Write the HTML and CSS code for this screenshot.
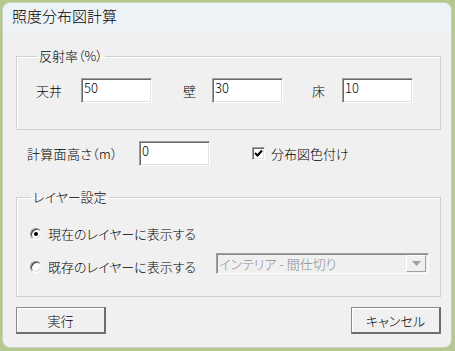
FILE: index.html
```html
<!DOCTYPE html>
<html lang="ja">
<head>
  <meta charset="UTF-8" />
  <title>照度分布図計算</title>
  <link rel="stylesheet" href="styles.css">
</head>
<body>
  <div class="window">
    <div class="titlebar">照度分布図計算</div>

    <div class="content">
      <!-- 反射率 -->
      <fieldset class="group group-reflect">
        <legend>反射率（%）</legend>
        <div class="reflect-row">
          <span class="label label-ceil">天井</span>
          <div class="textbox">50</div>
          <span class="label label-wall">壁</span>
          <div class="textbox">30</div>
          <span class="label label-floor">床</span>
          <div class="textbox">10</div>
        </div>
      </fieldset>

      <!-- 計算面高さ -->
      <div class="height-row">
        <span class="label label-height">計算面高さ（m）</span>
        <div class="textbox">0</div>
        <label class="check">
          <span class="check-box">
            <svg width="11" height="11" viewBox="0 0 11 11"><path d="M2 5 L4.5 7.5 L9 2.5" fill="none" stroke="#000" stroke-width="2"/></svg>
          </span>
          分布図色付け
        </label>
      </div>

      <!-- レイヤー設定 -->
      <fieldset class="group group-layer">
        <legend>レイヤー設定</legend>
        <div class="radio-row">
          <span class="radio checked"></span>
          <span class="radio-text">現在のレイヤーに表示する</span>
        </div>
        <div class="radio-row radio-row-combo">
          <span class="radio"></span>
          <span class="radio-text">既存のレイヤーに表示する</span>
          <div class="combo">
            <span class="combo-text">インテリア - 間仕切り</span>
            <span class="combo-btn">
              <svg width="9" height="5" viewBox="0 0 9 5"><path d="M0 0 H9 L4.5 5 Z" fill="#a0a0a0"/></svg>
            </span>
          </div>
        </div>
      </fieldset>

      <div class="buttons">
        <button class="btn">実行</button>
        <button class="btn">キャンセル</button>
      </div>
    </div>
  </div>
</body>
</html>
```

FILE: styles.css
```css
:root {
  --outer: #b5c88f;
  --title-bg: #edf2f7;
  --face: #f0f0f0;
  --font-ui: 'Noto Sans CJK JP', 'Noto Sans', sans-serif;
}

body {
  margin: 0;
  background-color: var(--outer);
  font-family: var(--font-ui);
  font-size: 13px;
  font-weight: 300;
  color: #000;
  font-feature-settings: 'palt';
}

.window {
  margin: 2px 3px 0 2px;
  height: 346px;
  box-sizing: border-box;
  border: 1px solid #c9d1bd;
  border-radius: 8px;
  overflow: hidden;
  background: var(--face);
}

.titlebar {
  height: 30px;
  box-sizing: border-box;
  padding: 3px 0 0 9px;
  line-height: 20px;
  font-size: 15px;
  background: var(--title-bg);
}

.content {
  padding: 0 10px 0 13px;
}

.group {
  margin: 0;
  padding: 0;
  border: 1px solid #d0d0d0;
  box-shadow: inset 1px 1px 0 #fff;
}

.group legend {
  margin-left: 1px;
  padding: 0 2px;
  line-height: 16px;
}

.group-reflect {
  margin-top: 15px;
  padding: 14px 0 26px 19px;
}

.reflect-row {
  display: flex;
  align-items: center;
}

.label {
  line-height: 16px;
}

.label-ceil { width: 45px; }
.label-wall { width: 29px; margin-left: 31px; }
.label-floor { width: 30px; margin-left: 29px; }
.label-height { width: 112px; letter-spacing: 0.3px; }

.textbox {
  width: 71px;
  height: 25px;
  box-sizing: border-box;
  padding: 1px 2px;
  line-height: 16px;
  background: #fff;
  border: 1px solid;
  border-color: #a0a0a0 #fff #fff #a0a0a0;
  box-shadow: inset 1px 1px 0 #696969, inset -1px -1px 0 #e3e3e3;
}

.height-row {
  display: flex;
  align-items: center;
  margin-top: 11px;
  padding-left: 11px;
}

.check {
  display: flex;
  align-items: center;
  margin-left: 42px;
  gap: 6px;
}

.check-box {
  display: flex;
  align-items: center;
  justify-content: center;
  width: 13px;
  height: 13px;
  box-sizing: border-box;
  background: #fff;
  border: 1px solid;
  border-color: #a0a0a0 #fff #fff #a0a0a0;
  box-shadow: inset 1px 1px 0 #696969, inset -1px -1px 0 #e3e3e3;
}

.group-layer {
  margin-top: 23px;
  padding: 19px 11px 15px 13px;
}

.radio-row {
  display: flex;
  align-items: center;
  height: 20px;
}

.radio-row-combo {
  height: auto;
  margin-top: 9px;
}

.radio {
  position: relative;
  width: 12px;
  height: 12px;
  box-sizing: border-box;
  border-radius: 50%;
  background: #fff;
  border: 1px solid;
  border-color: #8a8a8a #fff #fff #8a8a8a;
  box-shadow: inset 1px 1px 0 #404040, inset -1px -1px 0 #dcdcdc;
}

.radio.checked::after {
  content: '';
  position: absolute;
  left: 3px;
  top: 3px;
  width: 4px;
  height: 4px;
  border-radius: 50%;
  background: #000;
}

.radio-text {
  margin-left: 6px;
  line-height: 16px;
}

.combo {
  display: flex;
  align-items: center;
  justify-content: space-between;
  margin-left: auto;
  margin-bottom: 7px;
  width: 213px;
  height: 21px;
  box-sizing: border-box;
  padding: 0 2px 0 2px;
  background: var(--face);
  border: 1px solid;
  border-color: #a0a0a0 #fff #fff #a0a0a0;
  box-shadow: inset 1px 1px 0 #8a8a8a;
  color: #8d8d8d;
}

.combo-btn {
  display: flex;
  align-items: center;
  justify-content: center;
  width: 20px;
  height: 17px;
  box-sizing: border-box;
  border: 1px solid;
  border-color: #fff #a0a0a0 #a0a0a0 #fff;
  background: var(--face);
}

.buttons {
  display: flex;
  justify-content: space-between;
  margin-top: 10px;
}

.btn {
  width: 90px;
  height: 27px;
  font-family: var(--font-ui);
  font-size: 13px;
  font-weight: 300;
  font-feature-settings: 'palt';
  background: var(--face);
  border: 1px solid #8a8a8a;
  border-right: 2px solid #6d6d6d;
  border-bottom: 2px solid #6d6d6d;
  box-shadow: inset 1px 1px 0 #fff;
  padding: 0;
  color: #000;
}
```
